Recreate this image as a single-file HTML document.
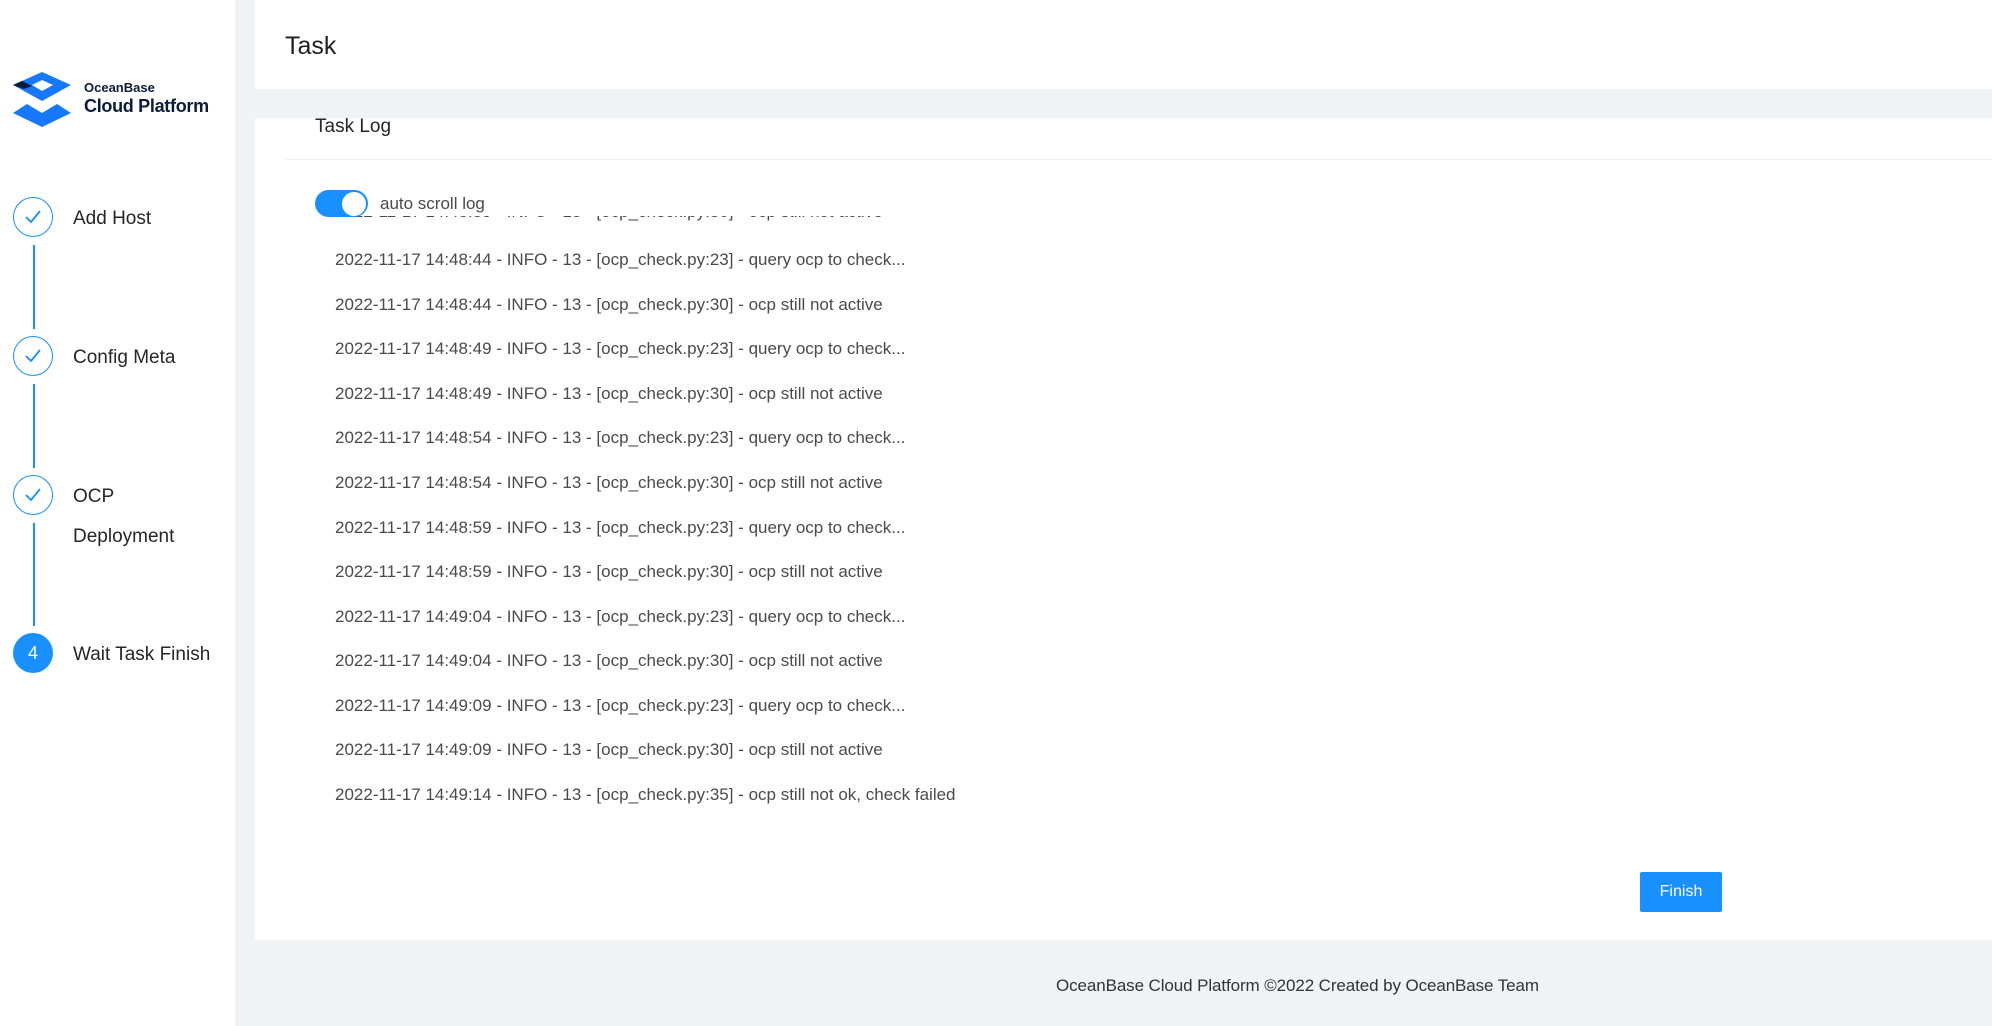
<!DOCTYPE html>
<html><head><meta charset="utf-8"><style>
*{margin:0;padding:0;box-sizing:border-box}
body{width:1992px;height:1026px;background:#f0f2f5;font-family:"Liberation Sans",sans-serif;position:relative;overflow:hidden;color:#262626}
.side{position:absolute;left:0;top:0;width:235px;height:1026px;background:#fff}
.hdr{position:absolute;left:255px;top:0;width:1737px;height:89px;background:#fff}
.hdr h1{position:absolute;left:30px;top:32px;font-size:25px;font-weight:normal;color:#1f1f1f}
.card{position:absolute;left:255px;top:118px;width:1737px;height:822px;background:#fff;overflow:hidden}
.abs{position:absolute;white-space:nowrap}
.circ{position:absolute;left:13px;width:40px;height:40px;border:1.5px solid #1890ff;border-radius:50%}
.circ svg{position:absolute;left:10px;top:11px}
.line{position:absolute;left:33px;width:2px;background:#1890ff}
.lbl{position:absolute;left:73px;font-size:19px;color:#262626}
.log{position:absolute;left:335px;top:216px;width:1000px;height:600px;overflow:hidden}
.row{position:absolute;left:0;font-size:17px;color:#4a4a4a;letter-spacing:0;white-space:nowrap}
</style></head><body>
<div class="side">
<svg class="abs" style="left:0;top:60px" width="80" height="70" viewBox="0 60 80 70">
<polygon points="13,85 42,72 71,85 42,101" fill="#1677ff"/>
<polygon points="32,85 42,80 53,85 42,91" fill="#fff"/>
<polygon points="13,85 22,81 32,86 24,89" fill="#0b1b3d"/>
<polygon points="13,113 27,104 42,113 57,104 71,113 42,127" fill="#1677ff"/>
</svg>
<div class="abs" style="left:84px;top:80px;font-size:13px;font-weight:bold;color:#0b1b3d">OceanBase</div>
<div class="abs" style="left:84px;top:96px;font-size:18px;font-weight:bold;color:#0b1b3d;letter-spacing:-0.3px">Cloud Platform</div>

<div class="circ" style="top:197px"><svg width="18" height="16" viewBox="0 0 18 16"><path d="M2 8 L7 13 L16 2" fill="none" stroke="#1890ff" stroke-width="1.8"/></svg></div>
<div class="lbl" style="top:208px">Add Host</div>
<div class="line" style="top:245px;height:84px"></div>
<div class="circ" style="top:336px"><svg width="18" height="16" viewBox="0 0 18 16"><path d="M2 8 L7 13 L16 2" fill="none" stroke="#1890ff" stroke-width="1.8"/></svg></div>
<div class="lbl" style="top:347px">Config Meta</div>
<div class="line" style="top:384px;height:84px"></div>
<div class="circ" style="top:475px"><svg width="18" height="16" viewBox="0 0 18 16"><path d="M2 8 L7 13 L16 2" fill="none" stroke="#1890ff" stroke-width="1.8"/></svg></div>
<div class="lbl" style="top:486px">OCP</div>
<div class="lbl" style="top:526px">Deployment</div>
<div class="line" style="top:523px;height:103px"></div>
<div style="position:absolute;left:13px;top:633px;width:40px;height:40px;border-radius:50%;background:#1890ff;color:#fff;font-size:18px;text-align:center;line-height:40px">4</div>
<div class="lbl" style="top:644px">Wait Task Finish</div>
</div>

<div class="hdr"><h1>Task</h1></div>
<div class="card">
<div class="abs" style="left:60px;top:-2px;font-size:19px;color:#262626">Task Log</div>
<div class="abs" style="left:30px;top:41px;width:1707px;height:1px;background:#f0f0f0"></div>
</div>
<div class="log">
<div class="row" style="top:-14px">2022-11-17 14:48:39 - INFO - 13 - [ocp_check.py:30] - ocp still not active</div>
<div class="row" style="top:34px">2022-11-17 14:48:44 - INFO - 13 - [ocp_check.py:23] - query ocp to check...</div>
<div class="row" style="top:79px">2022-11-17 14:48:44 - INFO - 13 - [ocp_check.py:30] - ocp still not active</div>
<div class="row" style="top:123px">2022-11-17 14:48:49 - INFO - 13 - [ocp_check.py:23] - query ocp to check...</div>
<div class="row" style="top:168px">2022-11-17 14:48:49 - INFO - 13 - [ocp_check.py:30] - ocp still not active</div>
<div class="row" style="top:212px">2022-11-17 14:48:54 - INFO - 13 - [ocp_check.py:23] - query ocp to check...</div>
<div class="row" style="top:257px">2022-11-17 14:48:54 - INFO - 13 - [ocp_check.py:30] - ocp still not active</div>
<div class="row" style="top:302px">2022-11-17 14:48:59 - INFO - 13 - [ocp_check.py:23] - query ocp to check...</div>
<div class="row" style="top:346px">2022-11-17 14:48:59 - INFO - 13 - [ocp_check.py:30] - ocp still not active</div>
<div class="row" style="top:391px">2022-11-17 14:49:04 - INFO - 13 - [ocp_check.py:23] - query ocp to check...</div>
<div class="row" style="top:435px">2022-11-17 14:49:04 - INFO - 13 - [ocp_check.py:30] - ocp still not active</div>
<div class="row" style="top:480px">2022-11-17 14:49:09 - INFO - 13 - [ocp_check.py:23] - query ocp to check...</div>
<div class="row" style="top:524px">2022-11-17 14:49:09 - INFO - 13 - [ocp_check.py:30] - ocp still not active</div>
<div class="row" style="top:569px">2022-11-17 14:49:14 - INFO - 13 - [ocp_check.py:35] - ocp still not ok, check failed</div>
</div>
<div class="abs" style="left:315px;top:190px;width:53px;height:27px;border-radius:14px;background:#1890ff"></div>
<div class="abs" style="left:342px;top:192px;width:24px;height:24px;border-radius:50%;background:#fff"></div>
<div class="abs" style="left:380px;top:194px;font-size:17px;color:#4a4a4a;letter-spacing:0">auto scroll log</div>
<div class="abs" style="left:1640px;top:872px;width:82px;height:40px;background:#1890ff;border-radius:2px;color:#fff;font-size:16px;text-align:center;line-height:40px">Finish</div>
<div class="abs" style="left:1056px;top:976px;font-size:17px;color:#333;letter-spacing:-0.1px">OceanBase Cloud Platform ©2022 Created by OceanBase Team</div>
</body></html>
